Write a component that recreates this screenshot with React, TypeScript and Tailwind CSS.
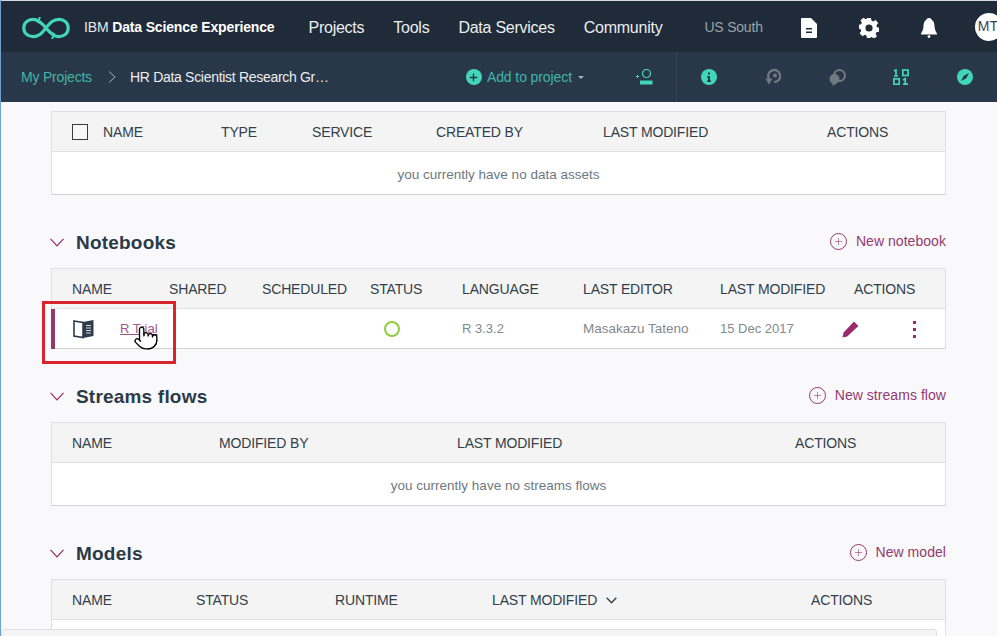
import { Pointer, Plus } from "lucide-react";
import { ReactNode } from "react";

const font = { fontFamily: '"Liberation Sans", Arial, sans-serif' };

function Logo() {
  return (
    <svg width="48" height="22" viewBox="0 0 48 22" fill="none" stroke="#41d6b8" strokeWidth="3.2" className="shrink-0">
      <path d="M17 4.2 C15 3 13 2.4 11 2.4 C5.5 2.4 1.8 6 1.8 11 C1.8 16 5.5 19.6 11 19.6 C17 19.6 20 16 24 11 C28 6 31 2.4 37 2.4 C42.5 2.4 46.2 6 46.2 11 C46.2 16 42.5 19.6 37 19.6 C35 19.6 33 19 31 17.8" />
      <path d="M31 17.8 C28 15.5 26 13.5 24 11 C22 8.5 20 6.5 17 4.2" />
      <path d="M18 0 L16 5 L21 7" strokeWidth="2" />
      <path d="M30 22 L32 17 L27 15" strokeWidth="2" />
    </svg>
  );
}

function DocIcon() {
  return (
    <svg width="16" height="20" viewBox="0 0 16 20">
      <path d="M0 1 a1 1 0 0 1 1-1 h9 l6 6 v13 a1 1 0 0 1-1 1 H1 a1 1 0 0 1-1-1 Z" fill="#fff" />
      <path d="M5 10 h6 v1.6 h-6 Z M5 13.4 h6 V15 h-6 Z" fill="#1f2b38" />
    </svg>
  );
}

function GearIcon() {
  return (
    <svg width="20" height="20" viewBox="0 0 20 20">
      <path
        fillRule="evenodd"
        fill="#fff"
        d="M8 0 h4 l.6 2.8 1.5.7 2.5-1.5 2.6 3 -1.7 2.3 .3 1.7 2.2.8 v4 l-2.6.5 -.8 1.5 1.4 2.5 -3 2.4 -2.2-1.6 -1.7.4 L12 20 H8 l-.6-2.6 -1.6-.7 -2.4 1.5 -2.8-2.9 1.6-2.3 -.4-1.6 L-.4 10.4 v-3.6 l2.6-.6 .7-1.5 -1.4-2.4 2.9-2.6 2.3 1.6 1.2-.6 Z M10 6.4 a3.6 3.6 0 1 0 0 7.2 a3.6 3.6 0 1 0 0-7.2 Z"
      />
    </svg>
  );
}

function BellIcon() {
  return (
    <svg width="16" height="20" viewBox="0 0 16 20">
      <path d="M8 0 C10 0 10.5 1 10.8 2 C13 3 13.4 6 13.6 9 C13.8 12 15 14 16 15.5 V16.5 H0 V15.5 C1 14 2.2 12 2.4 9 C2.6 6 3 3 5.2 2 C5.5 1 6 0 8 0 Z" fill="#fff" />
      <circle cx="8" cy="18.6" r="1.4" fill="#fff" />
    </svg>
  );
}

function AddUserIcon() {
  return (
    <svg width="18" height="16" viewBox="0 0 18 16" fill="none" stroke="#41d6b8">
      <circle cx="10.5" cy="4.5" r="4" strokeWidth="1.2" />
      <path d="M4 11.5 h12.5 v4 H4 Z" fill="#41d6b8" stroke="none" />
      <path d="M0 7.5 h3 M1.5 6 v3" strokeWidth="1" />
    </svg>
  );
}

function InfoIcon() {
  return (
    <svg width="16" height="16" viewBox="0 0 16 16">
      <circle cx="8" cy="8" r="8" fill="#41d6b8" />
      <path d="M7 3.5 h2 v2 H7 Z M6 7 h3 v4.5 h1 V13 H6 v-1.5 h1 V8.5 H6 Z" fill="#28384a" />
    </svg>
  );
}

function RewindIcon() {
  return (
    <svg width="16" height="18" viewBox="0 0 16 18" fill="none" stroke="#70797f" strokeWidth="2.2">
      <path d="M4 11 a6 6 0 1 1 5 3" />
      <circle cx="10" cy="7.5" r="2" fill="#70797f" stroke="none" />
      <path d="M0.5 10.5 h7 L4 16.5 Z" fill="#70797f" stroke="none" />
    </svg>
  );
}

function ChatIcon() {
  return (
    <svg width="17" height="17" viewBox="0 0 17 17">
      <circle cx="10.5" cy="6.5" r="5.5" fill="none" stroke="#70797f" strokeWidth="2" />
      <circle cx="5.5" cy="10" r="5" fill="#70797f" />
      <path d="M3 13 L4 17 L8 14 Z" fill="#70797f" />
    </svg>
  );
}

function BinaryIcon() {
  return (
    <svg width="16" height="16" viewBox="0 0 16 16" fill="none" stroke="#41d6b8" strokeWidth="1.7">
      <path d="M1 2 L3 1 V7 M1 7 H5" />
      <rect x="9.8" y="1" width="5.3" height="5.5" />
      <rect x="0.9" y="9.8" width="5.3" height="5.5" />
      <path d="M10 11 L12.2 9.8 V15.5 M10 15.2 H15" />
    </svg>
  );
}

function CompassIcon() {
  return (
    <svg width="16" height="16" viewBox="0 0 16 16">
      <circle cx="8" cy="8" r="8" fill="#41d6b8" />
      <path d="M12 4 L9.3 9.3 L4 12 L6.7 6.7 Z" fill="#28384a" />
    </svg>
  );
}

function BookIcon() {
  return (
    <svg width="21" height="20" viewBox="0 0 21 20">
      <path d="M1 2 L10 3.5 V18.5 L1 17 Z" fill="#fff" stroke="#2d3c49" strokeWidth="1.6" />
      <path d="M10 3 L20.5 1 V17 L10 19 Z" fill="#2d3c49" />
      <path d="M13 6.5 h5 M13 9 h5 M13 11.5 h5 M13 14 h5" stroke="#d5dade" strokeWidth="1" />
    </svg>
  );
}

function PencilIcon() {
  return (
    <svg width="17" height="17" viewBox="0 0 17 17">
      <path d="M12 0.6 L16.4 5 L5.2 15.4 L0.4 16.6 L1.6 11.6 Z" fill="#9b2a6b" />
    </svg>
  );
}

function SectionTitle({ title, action }: { title: string; action: string }) {
  return (
    <div className="flex items-center justify-between h-[26px] mb-[13px]">
      <div className="flex items-center">
        <svg width="14" height="9" viewBox="0 0 14 9" fill="none" stroke="#9b2a6b" strokeWidth="1.2" className="ml-[-1px] mr-[12px]">
          <path d="M0.5 0.8 L7 7.8 L13.5 0.8" />
        </svg>
        <span className="text-[19px] font-bold text-[#2b3a47] tracking-[0.2px] pt-[2px]">{title}</span>
      </div>
      <div className="flex items-center gap-[9px] text-[14px] tracking-[0.05px] text-[#94396f] mt-[-1px]">
        <span className="flex items-center justify-center w-[17px] h-[17px] rounded-full border border-[#94396f]">
          <Plus className="w-[11px] h-[11px]" strokeWidth={1.3} />
        </span>
        {action}
      </div>
    </div>
  );
}

function Table({ cols, heads, children }: { cols: string; heads: ReactNode[]; children: ReactNode }) {
  return (
    <div className="border border-[#dfe0e2] border-b-[#d0d1d3] bg-white">
      <div className={`grid ${cols} items-center h-[40px] pt-[1px] bg-[#f4f4f4] border-b border-[#dfe0e2] text-[14px] tracking-[-0.15px] text-[#333f4a]`}>
        {heads.map((h, i) => (
          <div key={i} className="whitespace-nowrap">{h}</div>
        ))}
      </div>
      {children}
    </div>
  );
}

function Empty({ text }: { text: string }) {
  return <div className="h-[42px] pt-[4px] flex items-center justify-center text-[13.5px] text-[#6e7880]">{text}</div>;
}

const NAV = ["Projects", "Tools", "Data Services", "Community"];

export default function App() {
  return (
    <div className="relative h-[636px] w-[997px] overflow-hidden bg-[#f9f9fb] border-l border-[#6fa3cf]" style={font}>
      {/* top header */}
      <div className="h-[1px] bg-[#d7dadd]" />
      <div className="flex items-center h-[51px] bg-[#1f2b38] text-white pl-[21px] pt-[2px] whitespace-nowrap">
        <Logo />
        <span className="ml-[14px] text-[14px] tracking-[-0.15px] text-[#e8eaec]">
          IBM <b className="font-bold text-white">Data Science Experience</b>
        </span>
        <span className="w-px h-[20px] bg-[#7b8590] ml-[17px] mr-[17px]" />
        <div className="flex gap-[29px] text-[16px] tracking-[-0.25px] text-[#eceef0]">
          {NAV.map((n) => (
            <span key={n}>{n}</span>
          ))}
        </div>
        <span className="ml-[42px] text-[14px] tracking-[-0.2px] text-[#9aa3ab]">US South</span>
        <div className="ml-[38px] shrink-0"><DocIcon /></div>
        <div className="ml-[42px] shrink-0"><GearIcon /></div>
        <div className="ml-[42px] shrink-0"><BellIcon /></div>
        <div className="ml-[38px] mt-[-2px] w-[28px] h-[28px] shrink-0 rounded-full bg-white text-[#39434c] text-[14px] flex items-center pl-[3px] overflow-hidden">MT</div>
      </div>
      {/* project bar */}
      <div className="flex items-center h-[50px] bg-[#28384a] pl-[20px] whitespace-nowrap">
        <span className="text-[14px] tracking-[-0.2px] text-[#41b5a5]">My Projects</span>
        <svg width="8" height="12" viewBox="0 0 8 12" fill="none" stroke="#a8b0b8" strokeWidth="1" className="ml-[16px] mr-[14px]">
          <path d="M1 0.5 L7 6 L1 11.5" />
        </svg>
        <span className="text-[14px] tracking-[-0.3px] text-[#eceef0] w-[336px]">HR Data Scientist Research Gr…</span>
        <span className="flex items-center justify-center w-[16px] h-[16px] rounded-full bg-[#41d6b8]">
          <Plus className="w-[11px] h-[11px] text-[#28384a]" strokeWidth={3} />
        </span>
        <span className="ml-[5px] text-[14px] tracking-[-0.1px] text-[#41b5a5]">Add to project</span>
        <span className="ml-[6px] mt-[1px] border-x-[3px] border-x-transparent border-t-[3px] border-t-[#a8b0b8]" />
        <div className="ml-[52px]"><AddUserIcon /></div>
        <div className="w-px h-[50px] bg-[#34465a] ml-[22px]" />
        <div className="ml-[24px]"><InfoIcon /></div>
        <div className="ml-[48px]"><RewindIcon /></div>
        <div className="ml-[48px]"><ChatIcon /></div>
        <div className="ml-[47px]"><BinaryIcon /></div>
        <div className="ml-[48px]"><CompassIcon /></div>
      </div>

      {/* page content */}
      <div className="pl-[50px] w-[945px]">
        <div className="pt-[9px]">
          <Table
            cols="grid-cols-[51px_118px_91px_124px_167px_224px_1fr]"
            heads={[
              <span className="block ml-[20px] w-[16px] h-[16px] border border-[#2f3b46] bg-[#f8f8f8]" />,
              "NAME",
              "TYPE",
              "SERVICE",
              "CREATED BY",
              "LAST MODIFIED",
              "ACTIONS",
            ]}
          >
            <Empty text="you currently have no data assets" />
          </Table>
        </div>

        <div className="pt-[34px]">
          <SectionTitle title="Notebooks" action="New notebook" />
          <div className="relative">
            <Table
              cols="grid-cols-[97px_93px_108px_92px_121px_137px_134px_1fr] pl-[20px]"
              heads={["NAME", "SHARED", "SCHEDULED", "STATUS", "LANGUAGE", "LAST EDITOR", "LAST MODIFIED", "ACTIONS"]}
            >
              <div className="grid grid-cols-[97px_93px_108px_92px_121px_137px_134px_1fr] items-center h-[39px] pl-[20px] pt-[1px] text-[13.5px] text-[#82898f]">
                <div className="flex items-center">
                  <span className="ml-[1px]"><BookIcon /></span>
                  <span className="ml-[26px] text-[13px] text-[#a0568a] underline">R Trial</span>
                </div>
                <div />
                <div />
                <div className="pl-[14px]">
                  <span className="block w-[16px] h-[16px] rounded-full border-2 border-[#8fce3e]" />
                </div>
                <div className="text-[13px]">R 3.3.2</div>
                <div>Masakazu Tateno</div>
                <div className="text-[13px]">15 Dec 2017</div>
                <div className="flex items-center">
                  <span className="ml-[-12px]"><PencilIcon /></span>
                  <span className="ml-[54px] flex flex-col gap-[4px]">
                    <span className="w-[3px] h-[3px] bg-[#9b2a6b]" />
                    <span className="w-[3px] h-[3px] bg-[#9b2a6b]" />
                    <span className="w-[3px] h-[3px] bg-[#9b2a6b]" />
                  </span>
                </div>
              </div>
            </Table>
            <span className="absolute left-0 top-[41px] w-[4px] h-[40px] bg-[#94396f]" />
          </div>
        </div>

        <div className="pt-[34px]">
          <SectionTitle title="Streams flows" action="New streams flow" />
          <Table
            cols="grid-cols-[147px_238px_338px_1fr] pl-[20px]"
            heads={["NAME", "MODIFIED BY", "LAST MODIFIED", "ACTIONS"]}
          >
            <Empty text="you currently have no streams flows" />
          </Table>
        </div>

        <div className="pt-[34px]">
          <SectionTitle title="Models" action="New model" />
          <Table
            cols="grid-cols-[124px_139px_157px_319px_1fr] pl-[20px]"
            heads={[
              "NAME",
              "STATUS",
              "RUNTIME",
              <span className="flex items-center gap-[9px]">
                LAST MODIFIED
                <svg width="11" height="7" viewBox="0 0 11 7" fill="none" stroke="#333f4a" strokeWidth="1.4">
                  <path d="M0.7 0.8 L5.5 5.8 L10.3 0.8" />
                </svg>
              </span>,
              "ACTIONS",
            ]}
          >
            <div className="h-[42px]" />
          </Table>
        </div>
      </div>

      {/* red annotation and cursor */}
      <div className="absolute left-[41px] top-[301px] w-[134px] h-[63px] border-[3px] border-[#d9232e]" />
      <Pointer className="absolute left-[132px] top-[325px] w-[26px] h-[26px] text-black" fill="#fff" strokeWidth={1.2} />

      {/* bottom panel peeking in */}
      <div className="absolute left-0 top-[629px] w-[936px] h-[12px] rounded-t-[3px] border border-[#dfe0e2] bg-[#f4f4f4]" />
    </div>
  );
}
